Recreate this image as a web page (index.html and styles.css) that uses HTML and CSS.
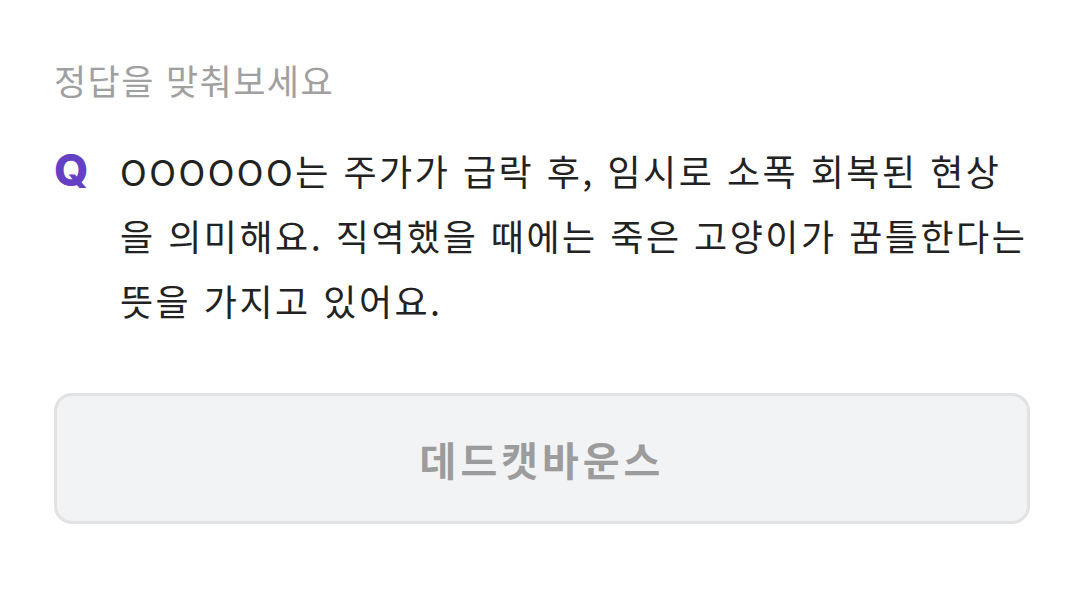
FILE: index.html
```html
<!DOCTYPE html>
<html lang="ko">
<head>
    <meta charset="UTF-8">
    <meta name="viewport" content="width=device-width, initial-scale=1.0">
    <title>정답을 맞춰보세요</title>
    <link rel="stylesheet" href="styles.css">
</head>
<body>
    <div class="quiz">
        <p class="quiz-label">정답을 맞춰보세요</p>

        <div class="question">
            <span class="q-mark">Q</span>
            <p class="q-text">OOOOOO는 주가가 급락 후, 임시로 소폭 회복된 현상을 의미해요. 직역했을 때에는 죽은 고양이가 꿈틀한다는 뜻을 가지고 있어요.</p>
        </div>

        <button class="answer">데드캣바운스</button>
    </div>
</body>
</html>
```

FILE: styles.css
```css
/* Page */
body {
    margin: 0;
    padding: 0;
    background: #ffffff;
    font-family: "Noto Sans CJK KR", "Noto Sans", sans-serif;
}

.quiz {
    width: 976px;
    padding: 56px 0 0 54px;
}

.quiz-label {
    margin: 0;
    font-size: 35px;
    line-height: 48px;
    letter-spacing: 1.4px;
    color: #a0a0a0;
}

/* Question */
.question {
    display: flex;
    margin-top: 34px;
    margin-right: -6px;
}

.q-mark {
    width: 66px;
    flex-shrink: 0;
    font-family: Inter, "Noto Sans", sans-serif;
    font-weight: 800;
    font-size: 44px;
    line-height: 65px;
    color: #6440c4;
}

.q-text {
    margin: 0;
    font-size: 36px;
    line-height: 65px;
    letter-spacing: 2.5px;
    color: #222222;
}

/* Answer button */
.answer {
    display: block;
    width: 976px;
    height: 131px;
    margin-top: 60px;
    border: 3px solid #e1e2e4;
    border-radius: 18px;
    background: #f2f3f5;
    font-family: "Noto Sans CJK KR", "Noto Sans", sans-serif;
    font-weight: 700;
    font-size: 40px;
    letter-spacing: 4px;
    color: #9c9c9c;
}
```
